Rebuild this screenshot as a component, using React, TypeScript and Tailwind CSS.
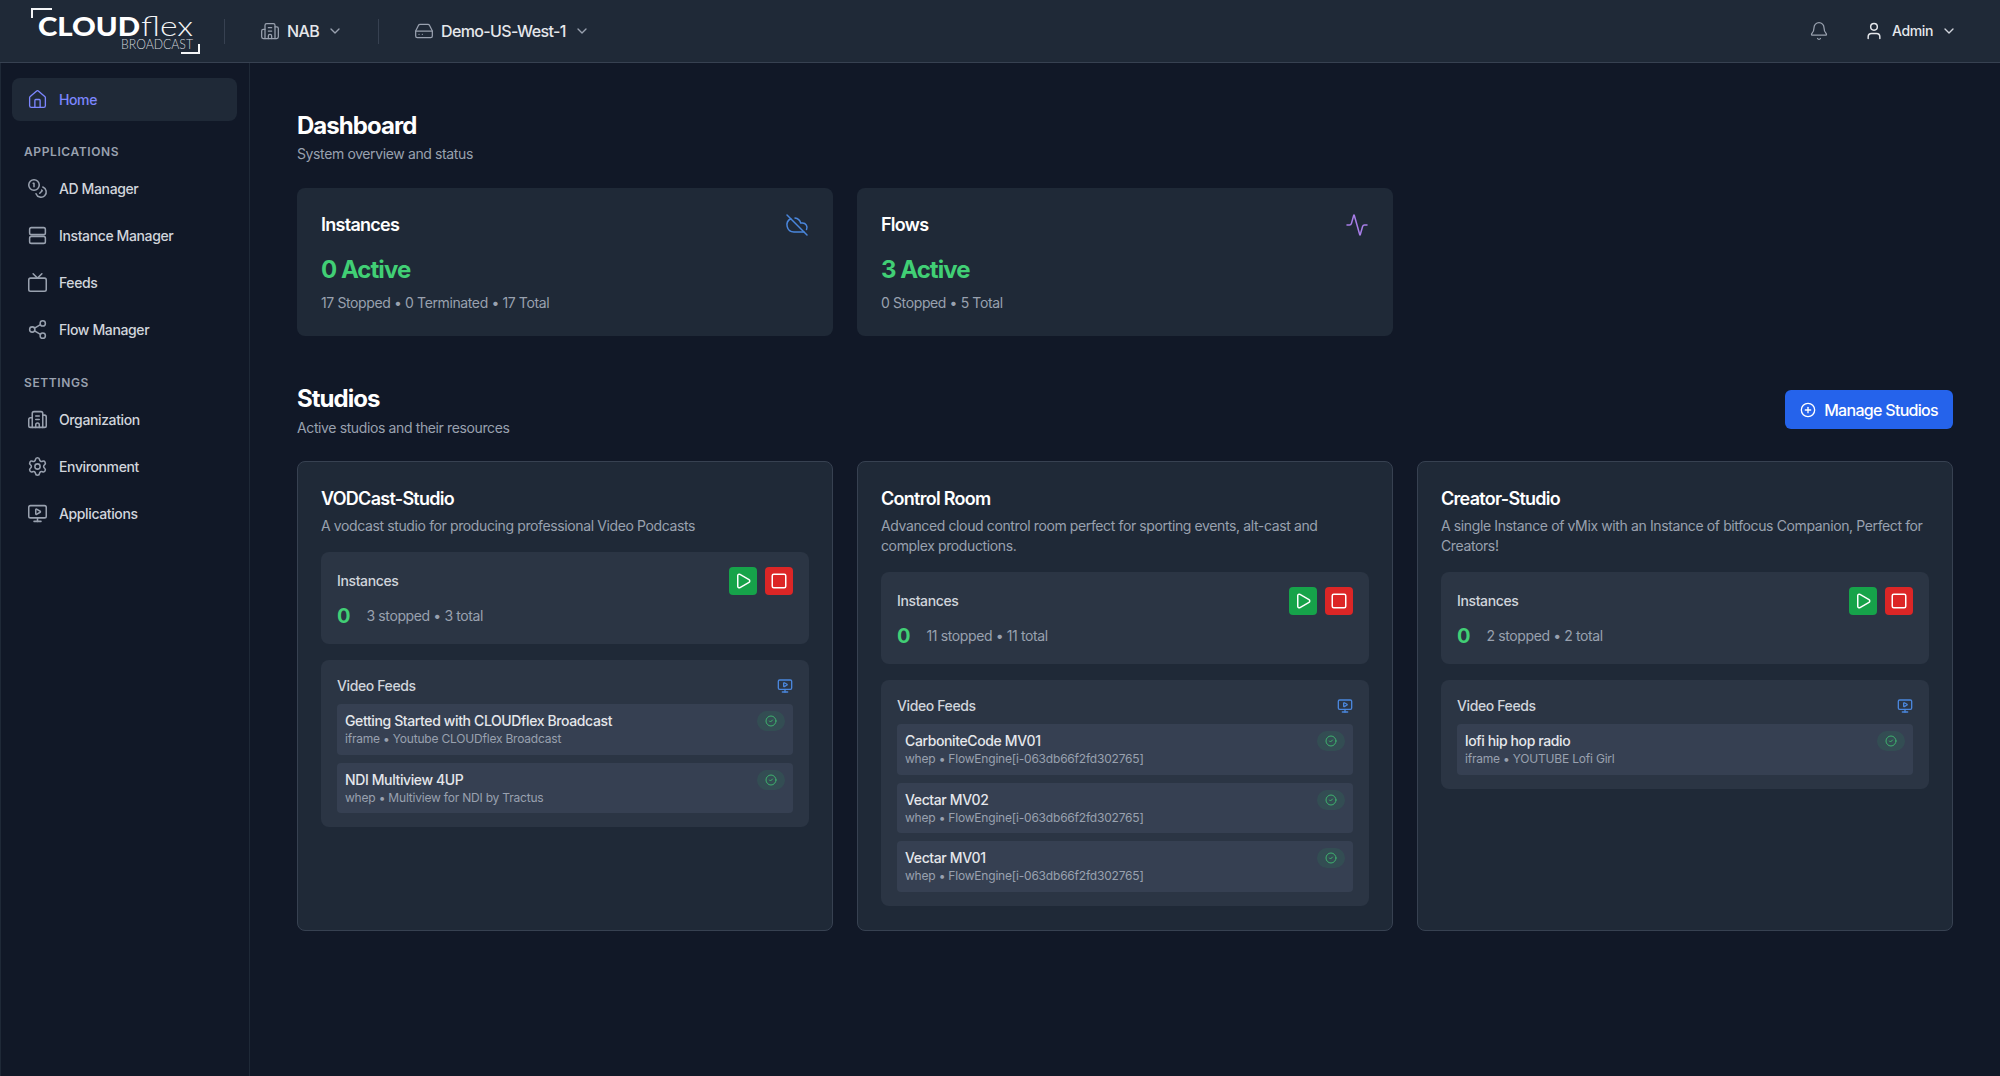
import {
  Activity,
  Bell,
  Building2,
  ChevronDown,
  CircleCheck,
  CirclePlus,
  CloudOff,
  Coins,
  HardDrive,
  House,
  MonitorPlay,
  Play,
  Settings,
  Share2,
  Square,
  Tv,
  User,
} from "lucide-react";

const studios = [
  {
    name: "VODCast-Studio",
    description: "A vodcast studio for producing professional Video Podcasts",
    stopped: 3,
    feeds: [
      { title: "Getting Started with CLOUDflex Broadcast", sub: "iframe • Youtube CLOUDflex Broadcast" },
      { title: "NDI Multiview 4UP", sub: "whep • Multiview for NDI by Tractus" },
    ],
  },
  {
    name: "Control Room",
    description: "Advanced cloud control room perfect for sporting events, alt-cast and complex productions.",
    stopped: 11,
    feeds: [
      { title: "CarboniteCode MV01", sub: "whep • FlowEngine[i-063db66f2fd302765]" },
      { title: "Vectar MV02", sub: "whep • FlowEngine[i-063db66f2fd302765]" },
      { title: "Vectar MV01", sub: "whep • FlowEngine[i-063db66f2fd302765]" },
    ],
  },
  {
    name: "Creator-Studio",
    description: "A single Instance of vMix with an Instance of bitfocus Companion, Perfect for Creators!",
    stopped: 2,
    feeds: [{ title: "lofi hip hop radio", sub: "iframe • YOUTUBE Lofi Girl" }],
  },
];

function ServerIcon({ className }: { className?: string }) {
  return (
    <svg
      xmlns="http://www.w3.org/2000/svg"
      viewBox="0 0 24 24"
      fill="none"
      stroke="currentColor"
      strokeWidth="1.75"
      className={className}
    >
      <rect x="3" y="3" width="18" height="8" rx="2" />
      <rect x="3" y="13" width="18" height="8" rx="2" />
    </svg>
  );
}

function Logo() {
  return (
    <svg xmlns="http://www.w3.org/2000/svg" width="210" height="62" viewBox="0 0 210 62" className="shrink-0">
      <path d="M32 18V9H52" fill="none" stroke="#f3f4f6" strokeWidth="2" />
      <path d="M181 53H199V44" fill="none" stroke="#f3f4f6" strokeWidth="2" />
      <text
        x="38"
        y="36"
        fill="#ffffff"
        fontFamily="Lato, sans-serif"
        fontWeight="900"
        fontSize="26"
        textLength="102"
        lengthAdjust="spacingAndGlyphs"
      >
        CLOUD
      </text>
      <text
        x="141"
        y="36"
        fill="#f3f4f6"
        fontFamily="Lato, sans-serif"
        fontWeight="300"
        fontSize="27"
        textLength="52"
        lengthAdjust="spacingAndGlyphs"
      >
        flex
      </text>
      <text
        x="121"
        y="49"
        fill="#d1d5db"
        fontFamily="Lato, sans-serif"
        fontWeight="300"
        fontSize="13"
        textLength="72"
        lengthAdjust="spacingAndGlyphs"
      >
        BROADCAST
      </text>
    </svg>
  );
}

function NavItem({ icon: Icon, label }: { icon: React.ElementType; label: string }) {
  return (
    <a className="flex h-[43px] items-center rounded-lg px-[15px] text-sm font-medium tracking-[-0.38px] text-gray-300">
      <Icon className="mr-[11px] h-[21px] w-[21px] text-gray-400" strokeWidth={1.75} />
      {label}
    </a>
  );
}

function StatCard({
  title,
  icon,
  active,
  detail,
}: {
  title: string;
  icon: React.ReactNode;
  active: string;
  detail: string;
}) {
  return (
    <div className="rounded-lg bg-[#1f2937] px-6 pt-[23px] pb-[23px]">
      <div className="mb-[15px] flex h-7 items-center justify-between">
        <h3 className="text-lg font-semibold tracking-[-0.04em] text-white">{title}</h3>
        {icon}
      </div>
      <p className="text-2xl font-bold tracking-[-0.04em] text-[#41cf75]">{active}</p>
      <p className="mt-[7px] text-sm tracking-[-0.38px] text-gray-400">{detail}</p>
    </div>
  );
}

export default function App() {
  return (
    <div className="flex h-screen flex-col overflow-hidden bg-[#111827] font-['Inter',sans-serif]">
      {/* Header */}
      <header className="flex h-[63px] shrink-0 items-center border-b border-[#374151] bg-[#1f2937] pr-[43px]">
        <Logo />
        <div className="ml-3.5 h-[25px] w-px bg-[#374151]" />
        <button className="ml-[35px] flex items-center text-base font-medium tracking-[-0.64px] text-gray-200">
          <Building2 className="mr-[7px] h-5 w-5 text-gray-400" strokeWidth={1.5} />
          NAB
          <ChevronDown className="ml-2 h-4 w-4 text-gray-400" />
        </button>
        <div className="ml-[35px] h-[25px] w-px bg-[#374151]" />
        <button className="ml-[35px] flex items-center text-base font-medium tracking-[-0.64px] text-gray-200">
          <HardDrive className="mr-[7px] h-5 w-5 text-gray-400" strokeWidth={1.5} />
          Demo-US-West-1
          <ChevronDown className="ml-2 h-4 w-4 text-gray-400" />
        </button>
        <div className="ml-auto flex items-center">
          <Bell className="h-5 w-5 text-gray-400" strokeWidth={1.5} />
          <User className="ml-[35px] h-5 w-5 text-gray-200" strokeWidth={1.75} />
          <span className="ml-2 text-sm font-medium tracking-[-0.38px] text-gray-200">Admin</span>
          <ChevronDown className="ml-2 h-4 w-4 text-gray-300" />
        </div>
      </header>

      <div className="flex min-h-0 flex-1">
        {/* Sidebar */}
        <aside className="w-[250px] shrink-0 border-x border-[#1f2937] pt-[15px] pr-3 pl-[11px]">
          <a className="flex h-[43px] items-center rounded-lg bg-[#1f2937] px-[15px] text-sm font-medium tracking-[-0.38px] text-indigo-400">
            <House className="mr-[11px] h-[21px] w-[21px]" strokeWidth={1.5} />
            Home
          </a>
          <p className="mt-[23px] mb-[7px] px-3 text-xs font-semibold tracking-wider text-gray-400 uppercase">
            Applications
          </p>
          <nav className="space-y-1">
            <NavItem icon={Coins} label="AD Manager" />
            <NavItem icon={ServerIcon} label="Instance Manager" />
            <NavItem icon={Tv} label="Feeds" />
            <NavItem icon={Share2} label="Flow Manager" />
          </nav>
          <p className="mt-6 mb-[7px] px-3 text-xs font-semibold tracking-wider text-gray-400 uppercase">Settings</p>
          <nav className="space-y-1">
            <NavItem icon={Building2} label="Organization" />
            <NavItem icon={Settings} label="Environment" />
            <NavItem icon={MonitorPlay} label="Applications" />
          </nav>
        </aside>

        {/* Main */}
        <main className="min-w-0 flex-1 pt-[47px] pr-[47px] pl-[47px]">
          <h1 className="text-2xl font-bold tracking-[-0.04em] text-white">Dashboard</h1>
          <p className="mt-[2px] text-sm tracking-[-0.38px] text-gray-400">System overview and status</p>

          <div className="mt-6 grid grid-cols-3 gap-6">
            <StatCard
              title="Instances"
              icon={<CloudOff className="h-6 w-6 text-[#4a86dc]" strokeWidth={1.5} />}
              active="0 Active"
              detail="17 Stopped • 0 Terminated • 17 Total"
            />
            <StatCard
              title="Flows"
              icon={<Activity className="h-6 w-6 text-[#a87ee8]" strokeWidth={1.5} />}
              active="3 Active"
              detail="0 Stopped • 5 Total"
            />
          </div>

          <div className="mt-[47px] flex items-start justify-between">
            <div>
              <h2 className="text-2xl font-bold tracking-[-0.04em] text-white">Studios</h2>
              <p className="mt-[3px] text-sm tracking-[-0.38px] text-gray-400">Active studios and their resources</p>
            </div>
            <button className="mt-[7px] flex h-[39px] items-center gap-2 rounded-md bg-[#2563eb] px-[15px] text-base font-medium tracking-[-0.7px] text-white">
              <CirclePlus className="h-4 w-4" />
              Manage Studios
            </button>
          </div>

          <div className="mt-[23px] grid grid-cols-3 gap-6">
            {studios.map((studio) => (
              <div key={studio.name} className="rounded-lg border border-[#374151] bg-[#1f2937] px-[23px] pt-[23px] pb-6">
                <h3 className="text-lg font-semibold tracking-[-0.04em] text-white">{studio.name}</h3>
                <p className="mt-[3px] text-sm tracking-[-0.38px] text-gray-400">{studio.description}</p>

                <div className="mt-4 rounded-lg bg-[#2b3544] px-4 pt-[15px] pb-4">
                  <div className="flex items-center justify-between">
                    <span className="text-sm font-medium tracking-[-0.38px] text-gray-300">Instances</span>
                    <div className="flex gap-2">
                      <button className="flex h-7 w-7 items-center justify-center rounded bg-[#16a34a] text-white">
                        <Play className="h-[18px] w-[18px]" />
                      </button>
                      <button className="flex h-7 w-7 items-center justify-center rounded bg-[#dc2626] text-white">
                        <Square className="h-[18px] w-[18px]" />
                      </button>
                    </div>
                  </div>
                  <div className="mt-[9px] flex h-6 items-center gap-4">
                    <span className="text-xl font-bold text-[#41cf75]">0</span>
                    <span className="text-sm tracking-[-0.38px] text-gray-400">
                      {studio.stopped} stopped • {studio.stopped} total
                    </span>
                  </div>
                </div>

                <div className="mt-4 rounded-lg bg-[#2b3544] px-4 pt-4 pb-3.5">
                  <div className="mb-2 flex items-center justify-between">
                    <span className="text-sm font-medium tracking-[-0.38px] text-gray-300">Video Feeds</span>
                    <MonitorPlay className="h-4 w-4 text-[#4a86dc]" />
                  </div>
                  <div className="space-y-2">
                    {studio.feeds.map((feed) => (
                      <div
                        key={feed.title}
                        className="flex items-start justify-between rounded bg-[#364052] px-2 py-[7.25px]"
                      >
                        <div>
                          <p className="text-sm font-medium tracking-[-0.38px] text-gray-200">{feed.title}</p>
                          <p className="text-xs tracking-[-0.2px] text-gray-400">{feed.sub}</p>
                        </div>
                        <span className="rounded-full bg-[#22c55e]/10 px-2 py-1 text-[#3fb26f]">
                          <CircleCheck className="h-3 w-3" />
                        </span>
                      </div>
                    ))}
                  </div>
                </div>
              </div>
            ))}
          </div>
        </main>
      </div>
    </div>
  );
}
